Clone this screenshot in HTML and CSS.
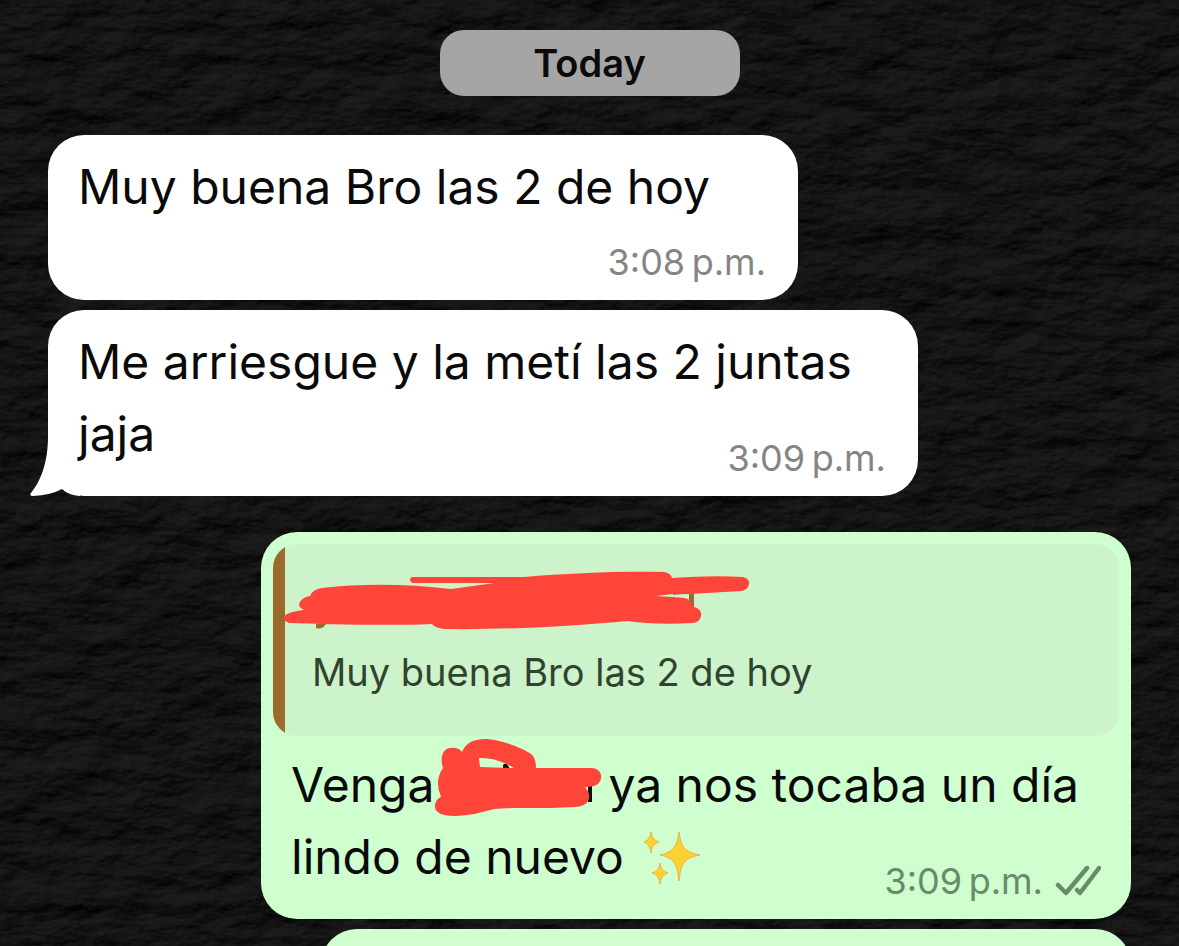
FILE: index.html
```html
<!DOCTYPE html>
<html lang="es">
<head>
<meta charset="utf-8">
<meta name="viewport" content="width=device-width, initial-scale=1">
<title>Chat</title>
<link rel="stylesheet" href="styles.css">
</head>
<body>
<svg class="wallpaper" aria-hidden="true">
  <filter id="paper" x="0" y="0" width="100%" height="100%" color-interpolation-filters="sRGB">
    <feTurbulence type="fractalNoise" baseFrequency="0.018 0.034" numOctaves="6" seed="21" result="noise"/>
    <feDiffuseLighting in="noise" surfaceScale="7" diffuseConstant="0.12" lighting-color="#ffffff">
      <feDistantLight azimuth="240" elevation="42"/>
    </feDiffuseLighting>
  </filter>
  <rect width="100%" height="100%" filter="url(#paper)"/>
</svg>
<main class="chat">
  <div class="day">Today</div>

  <article class="bubble incoming short">
    <p class="text">Muy buena Bro las 2 de hoy</p>
    <footer class="meta"><time>3:08&#8239;p.m.</time></footer>
  </article>

  <article class="bubble incoming">
    <p class="text">Me arriesgue y la metí las 2 juntas jaja <span class="meta inline"><time>3:09&#8239;p.m.</time></span></p>
    <svg class="tail" viewBox="0 0 50 60" aria-hidden="true"><path fill="#fff" d="M18 0C18 28 10 46 1 57Q-1 60 3 60Q21 59 32 53Q38 59 50 60V0Z"/></svg>
  </article>

  <article class="bubble outgoing">
    <blockquote class="quote">
      <svg class="author-mark" viewBox="0 0 470 60" aria-hidden="true">
        <path fill="#9c6a2d" d="M32 53H42Q38 59 32 57ZM405 22H410V40H405Z"/>
        <path fill="#ff453a" d="M129 6H240C285 2 340 0 380 1Q387 2 388 7Q430 4 459 6Q466 8 465 13Q464 19 457 20L389 24V23L372 25L403 27L410 36Q418 38 417 45Q416 51 409 52Q370 54 344 50C290 55 220 59 160 58Q151 57 148 53C100 55 40 53 5 52Q-1 50 0 46Q2 41 20 39Q13 36 16 31Q19 26 26 25Q29 18 38 17C80 12 125 13 167 18L211 12H129Q126 11 126 9Q126 6 129 6Z"/>
        <path fill="#cdf3cb" d="M372 25L389 24L404 23V28Q390 24 372 25Z"/>
      </svg>
      <p class="quote-text">Muy buena Bro las 2 de hoy</p>
    </blockquote>
    <p class="text">Venga<svg class="word-mark" viewBox="0 0 168 78" aria-hidden="true"><path fill="#0a100b" d="M69 26Q72 22 75 28V32H69ZM154 40H158V63H154Z"/><path fill="#ff453a" fill-rule="evenodd" d="M9 29C6 20 8 10 16 9Q24 8 28 13C32 3 41 0 51 0C64 0 87 8 97 15Q102 19 102 29H157C165 29 168 35 167 39C166 46 160 48 151 48Q156 54 155 60Q152 68 140 68C110 70 80 68 60 70C48 73 36 77 20 77C7 77 0 73 1 66Q2 60 7 58Q0 42 9 29ZM45 19L46 28L80 29Q62 18 45 19Z"/></svg>ya nos tocaba un día lindo de nuevo <svg class="sparkles" viewBox="0 0 58 54" role="img" aria-label="✨"><g fill="#ffd12e" stroke="#e8b24a" stroke-width="1" stroke-linejoin="round"><path d="M36 1C38 15 41 21 57 24C41 27 38 32 36 50C34 32 31 27 17 24C31 21 34 15 36 1Z"/><path d="M8 1C9 7 11 9 16 11C11 13 9 15 8 22C7 15 5 13 1 11C5 9 7 7 8 1Z"/><path d="M17 32C18 38 20 40 25 42C20 44 18 46 17 53C16 46 14 44 9 42C14 40 16 38 17 32Z"/></g></svg> <span class="meta inline"><time>3:09&#8239;p.m.</time>
      <svg class="checks" viewBox="0 0 46 30" role="img" aria-label="Delivered"><path d="M3 19L11 27L32 2M22 24L25 27L44 2" fill="none" stroke="#6a8a69" stroke-width="4.5" stroke-linecap="round" stroke-linejoin="round"/></svg></span></p>
  </article>

  <article class="bubble outgoing next"></article>
</main>
</body>
</html>
```
FILE: styles.css
```css
* {
  box-sizing: border-box;
}

body {
  margin: 0;
  background: #181818;
  font-family: Inter, "Liberation Sans", sans-serif;
  color: #0a0a0a;
}

p,
blockquote {
  margin: 0;
}

.wallpaper {
  position: fixed;
  inset: 0;
  width: 100%;
  height: 100%;
}

.chat {
  position: relative;
  display: flex;
  flex-direction: column;
  gap: 10px;
  height: 100vh;
  overflow: hidden;
  padding: 30px 48px 0;
}

.chat > * {
  flex-shrink: 0;
}

.day {
  align-self: center;
  width: 300px;
  margin-bottom: 29px;
  border-radius: 24px;
  background: #a5a5a5;
  font-size: 38px;
  font-weight: 600;
  line-height: 66px;
  text-align: center;
}

.bubble {
  position: relative;
  isolation: isolate;
  width: 870px;
  max-width: 100%;
  padding: 16px 32px 16px 30px;
  border-radius: 36px;
}

.incoming {
  align-self: flex-start;
  background: #fff;
}

.short {
  width: 750px;
}

.outgoing {
  align-self: flex-end;
  margin-top: 26px;
  padding: 12px 30px 16px;
  background: #cfffcf;
}

.next {
  width: 810px;
  height: 80px;
  margin-top: 0;
}

.text {
  display: flow-root;
  font-size: 48px;
  line-height: 72px;
}

.meta {
  display: flex;
  justify-content: flex-end;
  align-items: center;
  gap: 12px;
  margin-top: 17px;
  color: #858585;
  font-size: 36px;
  line-height: 44px;
}

.inline {
  float: right;
  margin-top: 38px;
}

.outgoing .meta {
  color: #6a8a69;
}

.checks {
  width: 46px;
  height: 30px;
}

.tail {
  position: absolute;
  z-index: -1;
  left: -18px;
  bottom: 0;
  width: 50px;
  height: 60px;
}

.quote {
  height: 192px;
  margin: 0 -18px 13px;
  padding: 27px 11px 0 0;
  overflow: hidden;
  border-radius: 24px;
  background: linear-gradient(to right, #9c6a2d 12px, #cdf3cb 12px);
}

.author-mark {
  display: block;
  width: 470px;
  height: 60px;
  margin-left: 11px;
}

.quote-text {
  margin: 17px 0 0 39px;
  color: #2f432f;
  font-size: 38px;
  line-height: 48px;
}

.word-mark {
  width: 168px;
  height: 78px;
  margin: -20px 6px -20px 0;
  vertical-align: 5px;
}

.sparkles {
  width: 58px;
  height: 54px;
  margin: -8px 0 -8px 6px;
  vertical-align: -3px;
}
```
